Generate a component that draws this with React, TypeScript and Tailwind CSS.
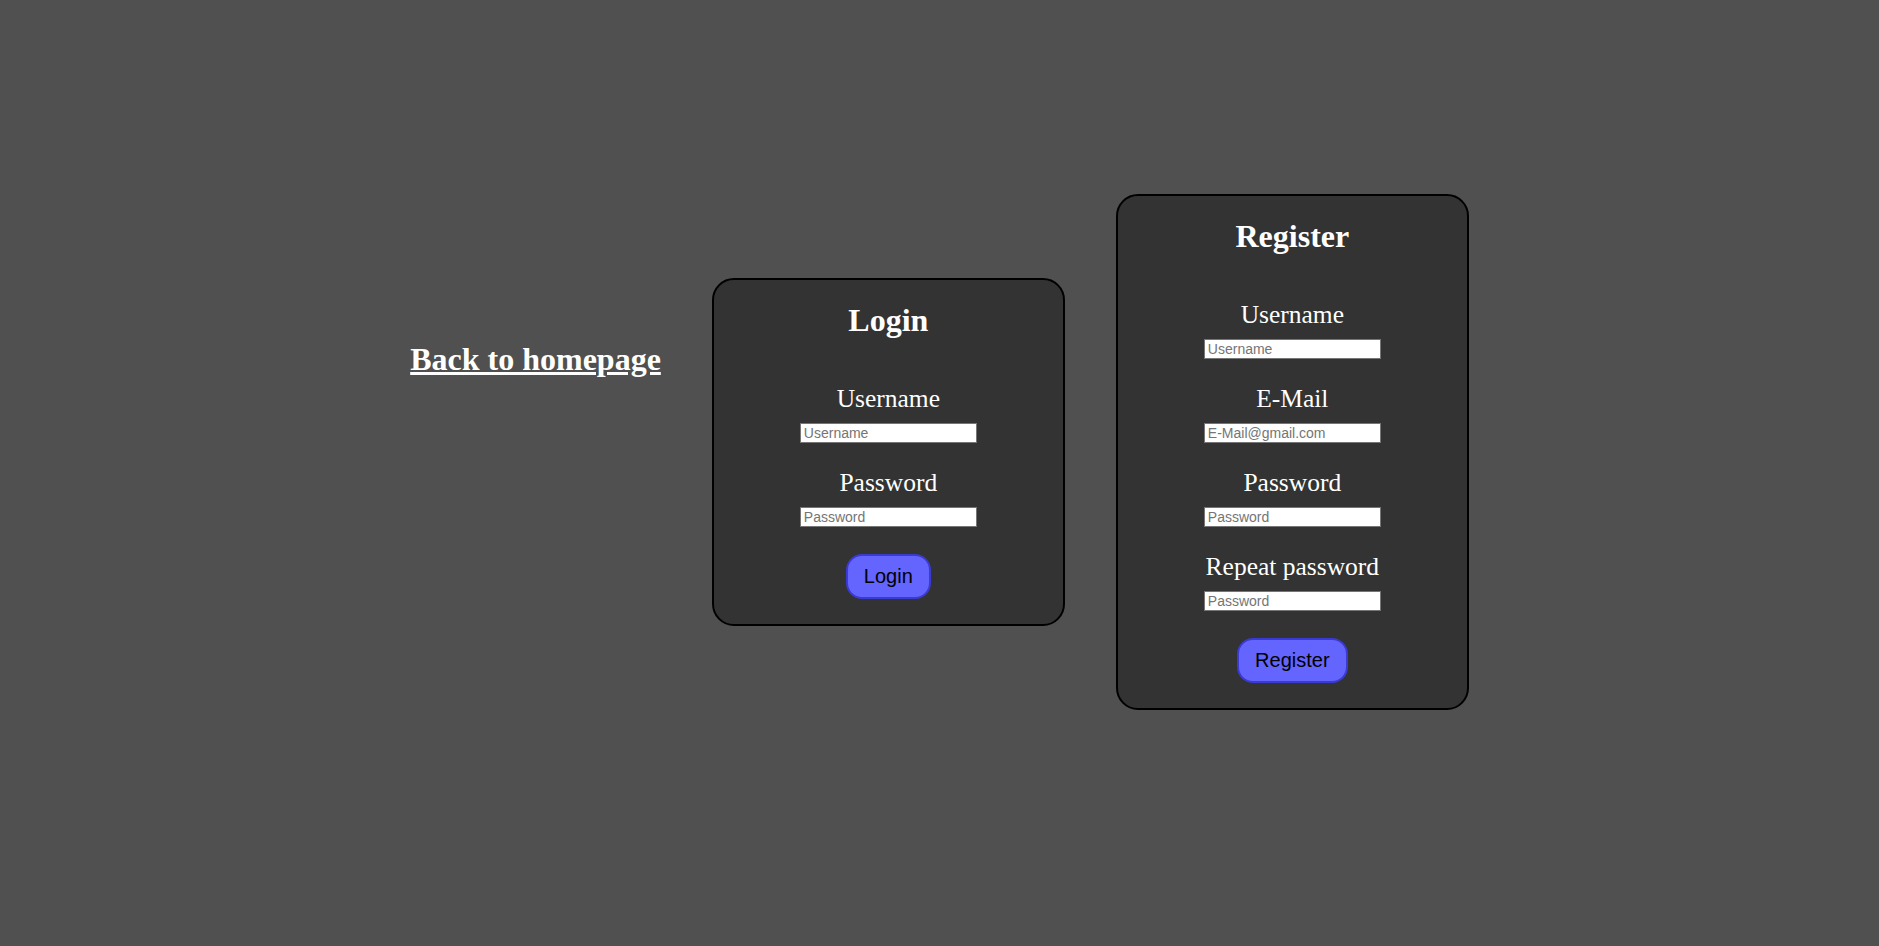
import React from 'react';

const serif = "font-['Liberation_Serif','Times_New_Roman',serif]";
const sans = "font-['Liberation_Sans',Arial,sans-serif]";

interface Field {
  label: string;
  placeholder: string;
  type: string;
}

function FormCard({ title, fields, button }: { title: string; fields: Field[]; button: string }) {
  return (
    <div className="w-[353px] shrink-0 rounded-[22px] border-2 border-black bg-[#333333] px-4 pt-[22px] pb-[25px] flex flex-col items-center text-white">
      <h1 className={`${serif} text-[32px] leading-[37px] font-bold`}>{title}</h1>
      <div className="mt-[45px] flex flex-col items-center">
        {fields.map((f) => (
          <div key={f.label + f.placeholder} className="flex flex-col items-center mb-[25px]">
            <label className={`${serif} text-[25.5px] leading-[29px]`}>{f.label}</label>
            <input
              type={f.type}
              placeholder={f.placeholder}
              className={`${sans} mt-[10px] w-[177px] h-[20px] border border-[#767676] bg-white px-[3px] py-0 text-[14px] leading-[18px] text-black placeholder:text-[#757575] outline-none`}
            />
          </div>
        ))}
      </div>
      <button
        className={`${sans} mt-[2px] px-[16px] h-[45px] rounded-[16px] border-2 border-[#3b3bd1] bg-[#6464ff] text-[20px] text-black`}
      >
        {button}
      </button>
    </div>
  );
}

export default function App() {
  return (
    <div className="min-h-screen bg-[#505050]">
      <div className="h-[903px] flex items-center justify-center gap-[51px]">
        <a href="#" className={`${serif} mb-[184px] text-[32px] leading-[37px] font-bold text-white underline`}>
          Back to homepage
        </a>
        <FormCard
          title="Login"
          button="Login"
          fields={[
            { label: 'Username', placeholder: 'Username', type: 'text' },
            { label: 'Password', placeholder: 'Password', type: 'password' },
          ]}
        />
        <FormCard
          title="Register"
          button="Register"
          fields={[
            { label: 'Username', placeholder: 'Username', type: 'text' },
            { label: 'E-Mail', placeholder: 'E-Mail@gmail.com', type: 'email' },
            { label: 'Password', placeholder: 'Password', type: 'password' },
            { label: 'Repeat password', placeholder: 'Password', type: 'password' },
          ]}
        />
      </div>
    </div>
  );
}
